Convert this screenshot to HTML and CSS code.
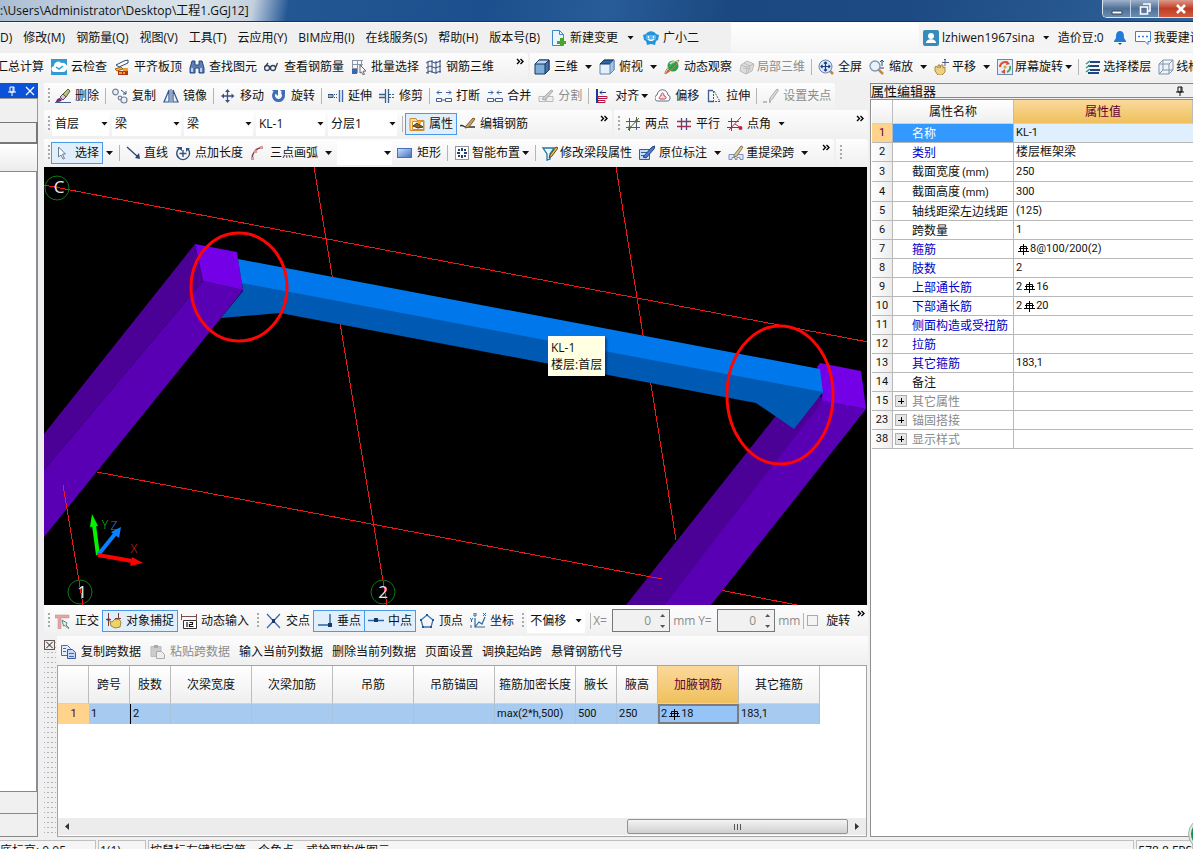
FILE: index.html
```html
<!DOCTYPE html>
<html lang="zh-CN">
<head>
<meta charset="utf-8">
<title>工程1.GGJ12</title>
<link rel="stylesheet" href="styles.css">
</head>
<body>
<svg class="defs" aria-hidden="true">
<defs>
<linearGradient id="gb" x1="0" y1="0" x2="1" y2="1"><stop offset="0" stop-color="#cfe3fa"/><stop offset="1" stop-color="#3f6cc4"/></linearGradient>
<symbol id="cloud" viewBox="0 0 16 16"><rect width="16" height="16" fill="#2f9ad6"/><path d="M4 13a3 3 0 0 1-1-6 4 4 0 0 1 7-3 4 4 0 0 1 3 9z" fill="#fff"/><path d="M5 8l3 2 4-3" fill="none" stroke="#2f9ad6" stroke-width="1.5"/></symbol>
<symbol id="slab" viewBox="0 0 16 16"><path d="M2 6l8-4 4-1v3L5 8z" fill="#fff" stroke="#2c4a7c"/><path d="M1 10l6-2 2 2-6 2z" fill="#f4b23c" stroke="#a4630c"/><path d="M4 12h10v4H4z" fill="#b0351c"/><path d="M9 9h5v3H9z" fill="#f0a030"/><path d="M5 13h3v2H5zM9 13h2v2H9z" fill="#f0a030"/></symbol>
<symbol id="bino" viewBox="0 0 16 16"><path d="M3 2h3v4h4V2h3l2 7v5h-5V9H6v5H1V9z" fill="#5b7fb8" stroke="#27457c"/><path d="M3 9v4M12 9v4" stroke="#dce8fa" stroke-width="1.5"/></symbol>
<symbol id="glasses" viewBox="0 0 16 16"><g fill="none" stroke="#34435c" stroke-width="1.3"><circle cx="3" cy="9" r="2.500"/><circle cx="9" cy="9" r="2.500"/><path d="M5.500 9h1M1 8l3-4M11.500 9l2-5"/></g></symbol>
<symbol id="batch" viewBox="0 0 16 16"><path d="M1 1.500h11M1 5.500h11M1 9.500h6M1.500 1v13M6.500 1v13M10.500 1v6" stroke="#8894a8" fill="none"/><path d="M1 10h5v5H1z" fill="#3b66b4"/><path d="M9 6l6 6-3 .3 1.500 3-1.500.5L10.500 13 9 14z" fill="#fff" stroke="#666"/></symbol>
<symbol id="rebar3d" viewBox="0 0 16 16"><path d="M0 4l4-2 5 2 6-2M0 9l4-2 5 2 6-2M0 14l4-2 5 2 6-2M2 2v13M6 1v13M10 2v13M14 1v13" stroke="#35527e" fill="none"/></symbol>
<symbol id="cube" viewBox="0 0 16 16"><path d="M1 5l4-4h10v10l-4 4H1z" fill="#7fadd8" stroke="#17375f"/><path d="M1 5l4-4h10l-4 4z" fill="#b5d7f3" stroke="#17375f"/><path d="M11 5l4-4v10l-4 4z" fill="#3f73aa" stroke="#17375f"/></symbol>
<symbol id="topcube" viewBox="0 0 16 16"><path d="M1 5l4-4h10v10l-4 4H1z" fill="#e3effb" stroke="#6285b4"/><path d="M1 5l4-4h10l-4 4z" fill="#2f659e" stroke="#17375f"/><path d="M11 5l4-4v10l-4 4z" fill="#a5c5e6" stroke="#6285b4"/></symbol>
<symbol id="orbit" viewBox="0 0 16 16"><circle cx="9" cy="7" r="5.500" fill="#25a052"/><path d="M6 5a5 5 0 0 1 5-2" stroke="#a9ecb9" stroke-width="2" fill="none"/><path d="M1 15C0 11 9 3 15 1 14 5 6 13 1 15z" fill="none" stroke="#b98a50"/><path d="M1 15l3-5 2 2z" fill="#d3562c"/></symbol>
<symbol id="local3d" viewBox="0 0 16 16"><path d="M2 6l6-4 7 3-2 7-6 3-6-3z" fill="#dedede" stroke="#bbb"/><path d="M2 6l6 2 7-3M8 8l-1 7M5 4l6 3-2 7M4 9l8 1" stroke="#bbb" fill="none"/></symbol>
<symbol id="full" viewBox="0 0 16 16"><path d="M11 11l4 4" stroke="#b98a4c" stroke-width="2.500"/><circle cx="7.500" cy="7.500" r="6.500" fill="#dceafa" stroke="#6784ad"/><path d="M7.500 3v9M3 7.500h9M6 4.500L7.500 3 9 4.500M6 10.500L7.500 12 9 10.500M4.500 6L3 7.500 4.500 9M10.500 6L12 7.500 10.500 9" stroke="#1d3d83" stroke-width="1.200" fill="none"/></symbol>
<symbol id="zoomi" viewBox="0 0 16 16"><path d="M9 10l5 5" stroke="#c08c44" stroke-width="2.500"/><circle cx="6" cy="7" r="5" fill="#e9f2fc" stroke="#8295b0" stroke-width="1.300"/><path d="M13 1v6M11 3l2-2 2 2M11 9h4" stroke="#29487d" fill="none"/></symbol>
<symbol id="pan" viewBox="0 0 16 16"><path d="M1 8l1-1 2 2V6h2v3l1-3h2v3l2-1v5l-3 3H4l-3-4z" fill="#efd080" stroke="#a68a48"/><path d="M11 0v7M8 3.500h7M10 1l1-1 1 1" stroke="#4a5d80" fill="none"/></symbol>
<symbol id="screenrot" viewBox="0 0 16 16"><rect x=".5" y=".5" width="15" height="15" fill="#e4eefb" stroke="#6c87b0"/><path d="M3 8a5 5 0 0 1 8-4" stroke="#e04b30" stroke-width="2" fill="none"/><path d="M13 7a5 5 0 0 1-3 6" stroke="#3fa64c" stroke-width="2" fill="none"/><path d="M10 2l3 3-4 1zM8 10v5l-4-2z" fill="#e04b30"/><circle cx="8" cy="8" r="1.500" fill="#e6a028"/></symbol>
<symbol id="floors" viewBox="0 0 16 16"><path d="M5 3h10M3 7h11M5 11h10M3 14h11" stroke="#20467c" stroke-width="2"/><path d="M1 5l4-3M1 9l4-3M1 13l4-3" stroke="#2c9c78" stroke-width="1.500"/></symbol>
<symbol id="wire" viewBox="0 0 16 16"><path d="M1 5l4-4h10v10l-4 4H1zM1 5h10v10M11 5l4-4M5 1v10h10M5 11l-4 4" fill="#eaf1fa" fill-opacity=".5" stroke="#7f93b3"/></symbol>
<symbol id="eraser" viewBox="0 0 16 16"><path d="M0 14.500h16" stroke="#445e91"/><path d="M1 14c0-2 2-4 4-4l2 2c-1 2-4 2-6 2z" fill="#7b2968"/><path d="M5 9l3 3 3-3-3-3z" fill="#d7c3dc" stroke="#555"/><path d="M8 6l5-5 2 2-4 6z" fill="#b7c37c" stroke="#566130"/></symbol>
<symbol id="copy" viewBox="0 0 16 16"><g fill="#eee" stroke="#7483a0" stroke-width="1.200"><circle cx="3.500" cy="4" r="2.800"/><circle cx="8" cy="10" r="1.800"/><circle cx="12" cy="12" r="3"/></g><path d="M9 2l5 4M14 3v3h-3" stroke="#34527f" fill="none"/></symbol>
<symbol id="mirror" viewBox="0 0 16 16"><path d="M6 2v12H1zM10 2v12h5z" fill="#e6f0ff" stroke="#31568e" stroke-width="1.200"/><path d="M8 1v14" stroke="#31568e"/></symbol>
<symbol id="move" viewBox="0 0 16 16"><path d="M7.500 3v10M3 8h10" stroke="#3a5488" stroke-width="1.300"/><path d="M7.500 1l2.500 3H5zM7.500 15l2.500-3H5zM1 8l3-2.500v5zM14.500 8l-3-2.500v5z" fill="#3a5488"/></symbol>
<symbol id="rotate" viewBox="0 0 16 16"><path d="M4 4a5 5 0 1 0 7 0" fill="none" stroke="#3f6cb4" stroke-width="3"/><path d="M1 2h6v6zM9 2h5v5z" fill="#3f6cb4"/></symbol>
<symbol id="extend" viewBox="0 0 16 16"><path d="M0 6.500h5v3H0z" fill="#9db3d4" stroke="#34527f"/><path d="M6 6.500h4M6 9.500h4" stroke="#34527f" stroke-dasharray="1 1"/><path d="M11.500 2v12M14.500 2v12" stroke="#3d6ab0" stroke-width="1.400"/></symbol>
<symbol id="trim" viewBox="0 0 16 16"><path d="M0 6.500h6M0 9.500h6M6.500 1v14M9.500 1v14" stroke="#34628f" stroke-width="1.300"/><path d="M10 6.500h6M10 9.500h6" stroke="#34628f" stroke-dasharray="2 1"/></symbol>
<symbol id="break" viewBox="0 0 16 16"><path d="M1 4.500h5M10 4.500h5M3 2.500l-2 2 2 2M13 2.500l2 2-2 2" fill="none" stroke="#3762a6"/><path d="M.5 10.500h5v3h-5zM9.500 10.500h6v3h-6zM6 12h3" fill="#fff" stroke="#445e91"/></symbol>
<symbol id="merge" viewBox="0 0 16 16"><path d="M1 4.500h5M10 4.500h5M4 2.500l2 2-2 2M12 2.500l-2 2 2 2" fill="none" stroke="#3762a6"/><path d="M.5 10.500h6v3h-6zM8.500 10.500h7v3h-7zM6 12h3" fill="#fff" stroke="#445e91"/></symbol>
<symbol id="split" viewBox="0 0 16 16"><path d="M1 8.500h7v5H1zM8 8.500h7v5H8z" fill="#eee" stroke="#bbb"/><path d="M4 11l9-9 2 1-8 9z" fill="#ccc" stroke="#aaa"/></symbol>
<symbol id="align" viewBox="0 0 16 16"><path d="M2 1v14" stroke="#173b86" stroke-width="2"/><path d="M5 4.500h6M7 2.500l-2 2 2 2" stroke="#173b86" fill="none"/><path d="M3 8.500h9v2H3zM3 12.500h7v2H3z" fill="#fff" stroke="#b01642"/></symbol>
<symbol id="offset" viewBox="0 0 16 16"><path d="M4 13a3 3 0 0 1-2-6c1-7 10-7 11 0a3 3 0 0 1-2 6z" fill="#fff" stroke="#5a6f90"/><path d="M5 11c-2-1 0-3 1-3 0-4 3-4 3 0 2 0 3 2 1 3z" fill="#f6dcdc" stroke="#c83d3d"/></symbol>
<symbol id="stretch" viewBox="0 0 16 16"><path d="M7 2.500H2.500v11H8" fill="none" stroke="#3c5d92" stroke-width="1.300"/><path d="M7.500 3v10M8 3l6 10.500H8" fill="none" stroke="#3c5d92" stroke-dasharray="2 1"/></symbol>
<symbol id="grippt" viewBox="0 0 16 16"><path d="M0 14h4M6 14h2" stroke="#bbb" stroke-width="2"/><path d="M7 10l7-9 1.500 1-6 9-3 2z" fill="#ddd" stroke="#aaa"/></symbol>
<symbol id="props" viewBox="0 0 16 16"><path d="M1 2.500h6l1 2h7v10H1z" fill="#ffe0a2" stroke="#d48b2a"/><path d="M3.500 5.500h11v8h-11z" fill="#fff" stroke="#d48b2a"/><path d="M4 10l4-3 6 4-5 1z" fill="#8a6a28" stroke="#43320f"/><path d="M9 5h3v3H9z" fill="#f2a72e"/></symbol>
<symbol id="editbar" viewBox="0 0 16 16"><path d="M0 10c3-2 3 1 6 1h9" stroke="#333" stroke-width="1.500" fill="none"/><path d="M6 10l7-8 2 1-6 8-4 1z" fill="#c9a36a" stroke="#7d592c"/></symbol>
<symbol id="twopt" viewBox="0 0 16 16"><path d="M4.500 2v13M11.500 1v13M1 11.500h14M1 5.500h14" stroke="#4c5b7c"/><path d="M3 14L14 2" stroke="#6e5b34"/><circle cx="4.500" cy="11.500" r="1.500" fill="#4b7a2a"/><circle cx="11.500" cy="5" r="1.500" fill="#4b7a2a"/></symbol>
<symbol id="parallel" viewBox="0 0 16 16"><path d="M5.500 2v12M10.500 2v12" stroke="#3d4f7d" stroke-width="1.300"/><path d="M1 5.500h14M1 10.500h14" stroke="#a03050" stroke-width="1.300"/></symbol>
<symbol id="angle" viewBox="0 0 16 16"><path d="M4.500 2v13M1 5.500h11M0 11.500h12" stroke="#3d4f7d"/><path d="M2 14L14 1M8 8l6 4" stroke="#c02a48"/><circle cx="13.500" cy="12" r="2" fill="#d02040"/></symbol>
<symbol id="cursor" viewBox="0 0 16 16"><path d="M3.500 2v10l2.500-2 2 4 1.500-.5-2-4.500h3z" fill="#fff" stroke="#6b7c98"/></symbol>
<symbol id="line" viewBox="0 0 16 16"><path d="M1 2l11 10" stroke="#2a4572" stroke-width="1.300"/><path d="M14 14l-5-1 4-5z" fill="#2a4572"/></symbol>
<symbol id="ptlen" viewBox="0 0 16 16"><path d="M5 3a6 6 0 0 0-1 10 6 6 0 0 0 8 0 6 6 0 0 0 1-9M8 5v7M4.500 8.500h7" fill="none" stroke="#34527f" stroke-width="1.400"/><path d="M1 2h6v4zM15 3l-4 0v4z" fill="#34527f"/></symbol>
<symbol id="arc" viewBox="0 0 16 16"><path d="M2 14C2 8 6 3 12 2.500" fill="none" stroke="#8c4450" stroke-width="1.400"/><path d="M1 12h3v3H1zM4 5h3v3H4zM10 1h3v3h-3z" fill="#d49ca2"/></symbol>
<symbol id="rect" viewBox="0 0 16 16"><rect x=".5" y="3.500" width="14" height="9" fill="url(#gb)" stroke="#4d6db4"/></symbol>
<symbol id="smart" viewBox="0 0 16 16"><rect x="1.500" y="1.500" width="13" height="13" fill="#fff" stroke="#334" stroke-dasharray="1 1"/><path d="M8 3v10M3 8h10" stroke="#24406c" stroke-dasharray="3 4" stroke-width="2"/><path d="M4 4h2v2H4zM10 4h2v2h-2zM4 10h2v2H4zM10 10h2v2h-2z" fill="#24406c"/></symbol>
<symbol id="modseg" viewBox="0 0 16 16"><path d="M1 3h11l-4 6v5l-3 1V9z" fill="#e9f6ff" stroke="#1f78a8" stroke-width="1.300"/><path d="M8 10l6-8 2 1-6 8-3 2z" fill="#edc052" stroke="#5a4317"/></symbol>
<symbol id="annot" viewBox="0 0 16 16"><path d="M.5 4.500h10v10H.5z" fill="#cbdcf6" stroke="#365ea8"/><path d="M2 7.500h6M2 10.500h4" stroke="#365ea8"/><path d="M4 12l9-10 3-1-1 3-8 9z" fill="#4c7ccc" stroke="#1f4484"/></symbol>
<symbol id="respan" viewBox="0 0 16 16"><path d="M1 14.500v-5h14v5h-3v-2H9v2H7v-2H4v2z" fill="#dfe9fa" stroke="#7c90ba"/><path d="M6 10l7-9 2 1-6 9-3 1z" fill="#d8c29a" stroke="#8a7a5e"/></symbol>
<symbol id="newdoc" viewBox="0 0 16 16"><path d="M1.500 .5h7l4 4v11h-11z" fill="#eaf4fd" stroke="#3c88c4"/><path d="M8.500 .5v4h4" fill="none" stroke="#3c88c4"/><path d="M9 8h3v3h3v3h-3v2H9v-2H6v-3h3z" fill="#4aa52a"/></symbol>
<symbol id="mascot" viewBox="0 0 16 16"><path d="M0 5l3-1a6 6 0 0 1 10 0l3 1-1 5-2 1-1 4-4-1-4 1-1-4-2-1z" fill="#2494dc"/><path d="M3 5h10v4q-5 4-10 0z" fill="#5fb6ea"/><path d="M5.500 6v2M10.500 6v2M5 9q3 3 6 0" stroke="#fff" stroke-width="1.200" fill="none"/></symbol>
<symbol id="user" viewBox="0 0 16 16"><rect width="16" height="16" rx="2" fill="#368cbb"/><circle cx="8" cy="6" r="3" fill="#fff"/><path d="M3 13c0-5 10-5 10 0z" fill="#fff"/></symbol>
<symbol id="bell" viewBox="0 0 16 16"><path d="M8 1c4 0 4 4 4 7l2 3v1H2v-1l2-3c0-3 0-7 4-7z" fill="#237bd8"/><path d="M6 13h4l-2 2z" fill="#174b85"/></symbol>
<symbol id="chat" viewBox="0 0 16 16"><path d="M.5 1.500h15v10H13v3l-3-3H.5z" fill="#fff" stroke="#3d7fd0"/><path d="M3 6.500h10" stroke="#3d7fd0" stroke-width="1.500" stroke-dasharray="2 2"/></symbol>
<symbol id="ortho" viewBox="0 0 16 16"><path d="M0 2h14v3H6v11H3V5H0z" fill="#dfa6a6" stroke="#c98a8a" stroke-width=".5"/><path d="M7 7l5 3-1 2 3 3-1 .5-3-3-1.500.5z" fill="#e6f0f0" stroke="#5f7f88"/></symbol>
<symbol id="osnap" viewBox="0 0 16 16"><path d="M2.500 0v13M12.500 0v7M0 6.500h5M9 5.500h6" stroke="#80393a"/><path d="M4 8l2 1 3-3 1 1 3-1 2 3-1 5-5 1-4-2z" fill="#f0d368" stroke="#a08838"/><circle cx="2.500" cy="6.500" r="1.500" fill="#80393a"/></symbol>
<symbol id="dyn" viewBox="0 0 16 16"><path d="M0 3.500h16M.5 1v6M15.500 1v6" stroke="#784c4c"/><path d="M2.500 7.500h13v8h-13z" fill="#fff" stroke="#333"/><path d="M6 9v5M8.500 9.500h3v2h-3v2h4" stroke="#111" stroke-width="1.200" fill="none"/></symbol>
<symbol id="cross" viewBox="0 0 16 16"><path d="M1 1l13 14M14 1L1 15" stroke="#3668a8" stroke-width="1.200"/><rect x="6" y="6" width="3" height="4" fill="#18386e"/></symbol>
<symbol id="perp" viewBox="0 0 16 16"><path d="M1 12h14M13 1v11" stroke="#2b62a6" stroke-width="1.400"/><rect x="11" y="10" width="4" height="4" fill="#18386e"/></symbol>
<symbol id="mid" viewBox="0 0 16 16"><path d="M0 7.500h16" stroke="#2b62a6" stroke-width="1.300"/><rect x="6" y="5" width="4" height="4" fill="#18386e"/></symbol>
<symbol id="vertex" viewBox="0 0 16 16"><path d="M8 2l6 5-2 7H4L2 7z" fill="none" stroke="#3a78b6" stroke-width="1.300"/><path d="M7 1h2v2H7zM1 6h2v2H1zM13 6h2v2h-2zM3 13h2v2H3zM11 13h2v2h-2z" fill="#245895"/></symbol>
<symbol id="coord" viewBox="0 0 16 16"><path d="M5 5v9h10M5 14l4-5 3 2 3-7" fill="none" stroke="#2c6a9e" stroke-width="1.200"/><path d="M0 5l1.500 2L3 5M1.500 7v2M13 0l3 3M16 0l-3 3M1 12v3M4 0h2v3H4z" stroke="#2c6a9e" fill="none"/></symbol>
<symbol id="pages" viewBox="0 0 16 16"><path d="M.5 1.500h6l3 3v7h-9z" fill="#e4edfb" stroke="#4868b0"/><path d="M6.500 5.500h5l3 3v6h-8z" fill="#c6d8f6" stroke="#3558a8"/><path d="M8 9.500h5M8 12.500h5M2 4.500h3M2 7.500h3" stroke="#4868b0"/></symbol>
<symbol id="paste" viewBox="0 0 16 16"><path d="M1 2.500h10v10H1z" fill="#ccc" stroke="#bbb"/><path d="M4 1h4v3H4z" fill="#aaa"/><path d="M6.500 7.500h5l3 3v4h-8z" fill="#eee" stroke="#aaa"/></symbol>
<symbol id="rebar" viewBox="0 0 12 12"><path d="M6.500 1v11M3.500 3.500h6v5h-6zM2 5.500h9M1 8.500h11" fill="none" stroke="#000"/></symbol>
<symbol id="pin" viewBox="0 0 10 10"><path d="M3 1h4v5H3zM6 1v5M1 6h8M5 6v4" fill="none" stroke="currentColor"/></symbol>
<symbol id="x" viewBox="0 0 10 10"><path d="M1 1l8 8M9 1L1 9" stroke="currentColor" stroke-width="1.200"/></symbol>
<symbol id="more" viewBox="0 0 8 8"><path d="M1 1l2.500 2.500L1 6M4.500 1L7 3.500 4.500 6" fill="none" stroke="#000" stroke-width="1.400"/></symbol>
</defs>
</svg>

<div class="app">
<header class="title"><span>:\Users\Administrator\Desktop\工程1.GGJ12]</span>
<div class="win">
<button aria-label="最小化"><svg viewBox="0 0 12 12"><path d="M1 8h10v3H1z" fill="#fff" stroke="#345"/></svg></button><button aria-label="还原"><svg viewBox="0 0 12 12"><path d="M4 1h7v7H9M1.500 4h7v7h-7z" fill="none" stroke="#fff" stroke-width="1.600"/></svg></button><button class="close" aria-label="关闭"><svg viewBox="0 0 12 12"><path d="M2 2l8 8M10 2l-8 8" stroke="#fff" stroke-width="2.600"/></svg></button>
</div></header>

<nav class="menu">
<div class="menu-main">
<button>D)</button><button>修改(M)</button><button>钢筋量(Q)</button><button>视图(V)</button><button>工具(T)</button><button>云应用(Y)</button><button>BIM应用(I)</button><button>在线服务(S)</button><button>帮助(H)</button><button>版本号(B)</button>
<button class="new"><svg class="i"><use href="#newdoc"/></svg>新建变更</button><i class="dd"></i><button><svg class="i"><use href="#mascot"/></svg>广小二</button>
</div>
<div class="menu-user">
<button><svg class="i"><use href="#user"/></svg>lzhiwen1967sina</button><i class="dd"></i><span>造价豆:0</span><button aria-label="通知"><svg class="i"><use href="#bell"/></svg></button><button><svg class="i"><use href="#chat"/></svg>我要建议</button>
</div>
</nav>

<div class="bar top">
<div class="seg first">
<button>汇总计算</button><button><svg class="i"><use href="#cloud"/></svg>云检查</button><button><svg class="i"><use href="#slab"/></svg>平齐板顶</button><button><svg class="i"><use href="#bino"/></svg>查找图元</button><button><svg class="i"><use href="#glasses"/></svg>查看钢筋量</button><button><svg class="i"><use href="#batch"/></svg>批量选择</button><button><svg class="i"><use href="#rebar3d"/></svg>钢筋三维</button><button class="more" aria-label="更多"><svg><use href="#more"/></svg></button>
</div>
<div class="seg grow views">
<button><svg class="i"><use href="#cube"/></svg>三维</button><i class="dd"></i><button><svg class="i"><use href="#topcube"/></svg>俯视</button><i class="dd"></i><button><svg class="i"><use href="#orbit"/></svg>动态观察</button><button class="tight" disabled><svg class="i"><use href="#local3d"/></svg>局部三维</button><i class="sep"></i><button><svg class="i"><use href="#full"/></svg>全屏</button><button><svg class="i"><use href="#zoomi"/></svg>缩放</button><i class="dd"></i><button class="tight"><svg class="i"><use href="#pan"/></svg>平移</button><i class="dd"></i><button class="tight"><svg class="i"><use href="#screenrot"/></svg>屏幕旋转</button><i class="dd near"></i><i class="sep"></i><button class="tight"><svg class="i"><use href="#floors"/></svg>选择楼层</button><button class="tight"><svg class="i"><use href="#wire"/></svg>线框</button>
</div>
</div>

<main class="work">
<aside class="left">
<div class="left-head"><svg><use href="#pin"/></svg><svg><use href="#x"/></svg></div>
<div class="left-tab"></div><div class="left-btn"></div><div class="left-tools"></div><div class="left-body"></div><div class="left-foot"></div><div class="left-foot"></div>
</aside>

<section class="center">
<div class="bar a">
<div class="seg edit"><i class="grip"></i>
<button><svg class="i"><use href="#eraser"/></svg>删除</button><i class="sep"></i><button><svg class="i"><use href="#copy"/></svg>复制</button><button><svg class="i"><use href="#mirror"/></svg>镜像</button><i class="sep"></i><button><svg class="i"><use href="#move"/></svg>移动</button><button><svg class="i"><use href="#rotate"/></svg>旋转</button><i class="sep"></i><button><svg class="i"><use href="#extend"/></svg>延伸</button><button><svg class="i"><use href="#trim"/></svg>修剪</button><i class="sep"></i><button><svg class="i"><use href="#break"/></svg>打断</button><button><svg class="i"><use href="#merge"/></svg>合并</button><button disabled><svg class="i"><use href="#split"/></svg>分割</button><i class="sep"></i><button><svg class="i"><use href="#align"/></svg>对齐</button><i class="dd near"></i><button><svg class="i"><use href="#offset"/></svg>偏移</button><button><svg class="i"><use href="#stretch"/></svg>拉伸</button><i class="sep"></i><button disabled><svg class="i"><use href="#grippt"/></svg>设置夹点</button>
</div></div>

<div class="bar b">
<div class="seg grow"><i class="grip"></i>
<div class="combos">
<div class="combo short"><select aria-label="楼层"><option>首层</option></select></div><div class="combo"><select aria-label="构件大类"><option>梁</option></select></div><div class="combo"><select aria-label="构件类型"><option>梁</option></select></div><div class="combo"><select aria-label="构件"><option>KL-1</option></select></div><div class="combo"><select aria-label="分层"><option>分层1</option></select></div>
</div>
<i class="sep"></i><button class="on"><svg class="i"><use href="#props"/></svg>属性</button><button><svg class="i"><use href="#editbar"/></svg>编辑钢筋</button><button class="more" aria-label="更多"><svg><use href="#more"/></svg></button>
</div>
<div class="seg axis"><i class="grip"></i>
<button><svg class="i"><use href="#twopt"/></svg>两点</button><button><svg class="i"><use href="#parallel"/></svg>平行</button><button><svg class="i"><use href="#angle"/></svg>点角</button><i class="dd"></i><button class="more" aria-label="更多"><svg><use href="#more"/></svg></button>
</div></div>

<div class="bar c">
<div class="seg grow"><i class="grip"></i>
<button class="on"><svg class="i"><use href="#cursor"/></svg>选择</button><i class="dd"></i><i class="sep"></i><button class="tight"><svg class="i"><use href="#line"/></svg>直线</button><button><svg class="i"><use href="#ptlen"/></svg>点加长度</button><button><svg class="i"><use href="#arc"/></svg>三点画弧</button><i class="dd"></i><div class="combo arcs"><select aria-label="弧方式"><option></option></select></div><button><svg class="i"><use href="#rect"/></svg>矩形</button><i class="sep"></i><button class="tight"><svg class="i"><use href="#smart"/></svg>智能布置</button><i class="dd near"></i><i class="sep"></i><button class="tight"><svg class="i"><use href="#modseg"/></svg>修改梁段属性</button><button><svg class="i"><use href="#annot"/></svg>原位标注</button><i class="dd"></i><button class="tight"><svg class="i"><use href="#respan"/></svg>重提梁跨</button><i class="dd"></i><button class="more" aria-label="更多"><svg><use href="#more"/></svg></button>
</div>
<div class="seg tail"><i class="grip"></i></div></div>

<div class="view">
<svg class="scene" viewBox="44 167 823 438" preserveAspectRatio="xMidYMid slice" role="img" aria-label="三维视图">
<g stroke="#f01818" fill="none" shape-rendering="crispEdges"><path d="M44 185L868 342M97 472L630 573M720 590L797 605M314 167L387 605M616 167L676 540"/></g>
<path d="M195 244L203 281 44 470V434z" fill="#4b0096"/>
<path d="M203 281L243 290 221 318 44 537V470z" fill="#5a00b4"/>
<path d="M195 244L237 252 243 290 203 281z" fill="#7300e6"/>
<path d="M782 408L823 396 825 402 664 605H626z" fill="#4b0096"/>
<path d="M823 394L824 401 866 409 711 605H664L820 405z" fill="#5a00b4"/>
<path d="M817 367L820 363 861 371 866 409 823 401 820 380z" fill="#7300e6"/>
<path d="M238 259L820 369 823 393 242 284z" fill="#0078eb"/>
<path d="M242 283L823 392 794 429 756 403 280 313 221 318 243 291z" fill="#005ab4"/>
<path d="M63 485L83 605M630 573L662 579" stroke="#f01818" shape-rendering="crispEdges"/>
<g fill="none" stroke="#107818"><circle cx="57" cy="188" r="12"/><circle cx="80" cy="592" r="12"/><circle cx="383" cy="592" r="12"/></g>
<g class="axis-label"><text x="59" y="193">C</text><text x="82" y="598">1</text><text x="383" y="598">2</text></g>
<g fill="none" stroke="#ff0505" stroke-width="3"><ellipse cx="239" cy="287" rx="48" ry="54"/><ellipse cx="780" cy="395" rx="53" ry="69"/></g>
<g stroke-width="4"><path d="M98 555L94 525" stroke="#00f400"/><path d="M98 555L115 534" stroke="#0880ff"/><path d="M98 555L132 561" stroke="#f00"/></g>
<path d="M92 514l6 12-8 1z" fill="#00f400"/><path d="M121 527l-2 11-8-6z" fill="#0880ff"/><path d="M143 563l-13 3 2-9z" fill="#f00"/>
<g class="gizmo"><text x="105" y="529" fill="#20d020">Y</text><text x="114" y="530" fill="#2080f0">Z</text><text x="134" y="553" fill="#f02020">X</text></g>
</svg>
<div class="tip">KL-1<br>楼层:首层</div>
</div>

<div class="bar snap">
<div class="seg grow"><i class="grip"></i>
<button><svg class="i"><use href="#ortho"/></svg>正交</button><button class="on"><svg class="i"><use href="#osnap"/></svg>对象捕捉</button><button><svg class="i"><use href="#dyn"/></svg>动态输入</button><i class="grip mid"></i><button><svg class="i"><use href="#cross"/></svg>交点</button><button class="on"><svg class="i"><use href="#perp"/></svg>垂点</button><button class="on"><svg class="i"><use href="#mid"/></svg>中点</button><button><svg class="i"><use href="#vertex"/></svg>顶点</button><button><svg class="i"><use href="#coord"/></svg>坐标</button><i class="grip mid"></i>
<div class="combo off"><select aria-label="偏移方式"><option>不偏移</option></select></div><i class="sep"></i>
<div class="field"><label for="dx">X=</label><span class="spin"><input id="dx" value="0" disabled></span><span>mm</span></div><div class="field"><label for="dy">Y=</label><span class="spin"><input id="dy" value="0" disabled></span><span>mm</span></div><i class="sep"></i>
<label class="check"><input type="checkbox">旋转</label><button class="more" aria-label="更多"><svg><use href="#more"/></svg></button>
</div></div>

<section class="data">
<div class="data-grip"><button aria-label="关闭"><svg><use href="#x"/></svg></button></div>
<div class="data-main">
<div class="data-tools"><button><svg class="i"><use href="#pages"/></svg>复制跨数据</button><button disabled><svg class="i"><use href="#paste"/></svg>粘贴跨数据</button><button>输入当前列数据</button><button>删除当前列数据</button><button>页面设置</button><button>调换起始跨</button><button>悬臂钢筋代号</button></div>
<div class="sheet">
<table class="span-table">
<colgroup><col class="w30"><col class="w41"><col class="w41"><col class="w81"><col class="w81"><col class="w81"><col class="w81"><col class="w81"><col class="w41"><col class="w41"><col class="w81"><col class="w81"></colgroup>
<thead><tr><th></th><th>跨号</th><th>肢数</th><th>次梁宽度</th><th>次梁加筋</th><th>吊筋</th><th>吊筋锚固</th><th>箍筋加密长度</th><th>腋长</th><th>腋高</th><th class="hot">加腋钢筋</th><th>其它箍筋</th></tr></thead>
<tbody><tr><th>1</th><td>1</td><td class="caret">2</td><td></td><td></td><td></td><td></td><td>max(2*h,500)</td><td>500</td><td>250</td><td class="sel">2<svg class="rb"><use href="#rebar"/></svg>18</td><td>183,1</td></tr></tbody>
</table>
<div class="hscroll"><i class="arr l"></i><div class="track"><div class="thumb"></div></div><i class="arr r"></i></div>
</div>
</div>
</section>
</section>

<aside class="props">
<div class="props-head"><h2>属性编辑器</h2><svg><use href="#pin"/></svg></div>
<div class="props-body">
<table class="prop-table">
<colgroup><col class="c-no"><col class="c-name"><col></colgroup>
<thead><tr><th></th><th>属性名称</th><th class="hot">属性值</th></tr></thead>
<tbody>
<tr class="cur"><th>1</th><td>名称</td><td>KL-1</td></tr>
<tr class="blue"><th>2</th><td>类别</td><td class="zh">楼层框架梁</td></tr>
<tr><th>3</th><td>截面宽度<small>(mm)</small></td><td>250</td></tr>
<tr><th>4</th><td>截面高度<small>(mm)</small></td><td>300</td></tr>
<tr><th>5</th><td>轴线距梁左边线距</td><td>(125)</td></tr>
<tr><th>6</th><td>跨数量</td><td>1</td></tr>
<tr class="blue"><th>7</th><td>箍筋</td><td><svg class="rb"><use href="#rebar"/></svg>8@100/200(2)</td></tr>
<tr class="blue"><th>8</th><td>肢数</td><td>2</td></tr>
<tr class="blue"><th>9</th><td>上部通长筋</td><td>2<svg class="rb"><use href="#rebar"/></svg>16</td></tr>
<tr class="blue"><th>10</th><td>下部通长筋</td><td>2<svg class="rb"><use href="#rebar"/></svg>20</td></tr>
<tr class="blue"><th>11</th><td>侧面构造或受扭筋</td><td></td></tr>
<tr class="blue"><th>12</th><td>拉筋</td><td></td></tr>
<tr class="blue"><th>13</th><td>其它箍筋</td><td>183,1</td></tr>
<tr><th>14</th><td>备注</td><td></td></tr>
<tr class="group"><th>15</th><td><button aria-label="展开"></button>其它属性</td><td></td></tr>
<tr class="group"><th>23</th><td><button aria-label="展开"></button>锚固搭接</td><td></td></tr>
<tr class="group"><th>38</th><td><button aria-label="展开"></button>显示样式</td><td></td></tr>
</tbody></table>
</div>
</aside>
</main>

<footer class="status"><span class="s1">底标高: 0.05</span><span class="s2">1(1)</span><span class="s3">按鼠标左键指定第一个角点，或拾取构件图元</span><span class="s4">578.8 FPS</span></footer>
<div class="ball"></div>
</div>
</body>
</html>
```

FILE: styles.css
```css
* { box-sizing: border-box; }
body { margin: 0; overflow: hidden; background: #f0f0f0; color: #111; font: 12px/16px "Open Sans", "Noto Sans CJK SC", sans-serif; }
.defs { position: absolute; width: 0; height: 0; }
button, select, input { font: inherit; color: inherit; margin: 0; }
button { display: inline-flex; align-items: center; gap: 4px; flex: none; padding: 0; border: 0; background: none; white-space: nowrap; }
button:disabled { color: #8c8c8c; }
.i { width: 16px; height: 16px; flex: none; }
.app { position: relative; display: flex; flex-direction: column; height: 100vh; overflow: hidden; }

.title { display: flex; flex: none; height: 22px; align-items: center; justify-content: space-between; border-bottom: 1px solid #17325c; background: linear-gradient(100deg, #a9bdd3 0, #c3d0df 80px, #dce5ea 190px, #c3d0df 250px, #235794 285px, #1c4f8d 480px, #285c98 600px, #1b4880 720px, #1d4a82 900px, #2f6299 100%); white-space: nowrap; }
.win { display: flex; align-self: flex-start; width: 91px; height: 18px; border: 1px solid #dbe5ef; border-width: 0 0 1px 1px; border-radius: 0 0 0 5px; overflow: hidden; }
.win button { flex: 0 0 28px; justify-content: center; border-right: 1px solid #c5d3e2; background: linear-gradient(#9fb3ca, #4f7098 50%, #6a8cb2); }
.win .close { flex: 0 0 44px; background: linear-gradient(#dc9a8a, #c03c24 50%, #d05c3e); }
.win svg { width: 12px; height: 12px; }

.menu { display: flex; flex: none; height: 30px; justify-content: space-between; background: linear-gradient(#fff, #f5f5f5); border-top: 1px solid #fafafa; }
.menu-main, .menu-user { display: flex; align-items: center; }
.menu-main { gap: 11px; padding-right: 32px; background: #f0f0f0; }
.menu-main .new { gap: 3px; }
.menu-main .dd { margin: 0 -2px; }
.menu-user { flex: 0 0 274px; gap: 8px; padding-left: 4px; background: #f4f4f4; overflow: hidden; white-space: nowrap; }
.menu-user .i { margin: 0 -1px 0 0; }

.bar { display: flex; flex: none; gap: 2px; }
.seg { display: flex; align-items: center; gap: 7px; min-width: 0; overflow: hidden; background: linear-gradient(#fdfdfd, #f0f0f0); border-radius: 0 3px 3px 0; white-space: nowrap; }
.grow { flex: 1; }
.top { height: 29px; padding-top: 1px; }
.first { flex: 0 0 528px; justify-content: flex-start; }
.first > button:first-child { margin-left: -4px; }
.views { padding-left: 4px; }
.tight { gap: 2px; }
.dd { flex: none; width: 7px; height: 4px; background: #111; clip-path: polygon(0 0, 100% 0, 50% 100%); }
.dd.near { margin-left: -5px; }
.sep { flex: none; width: 1px; height: 16px; margin: 0 -1px; background: #b5b5b5; }
.grip { flex: none; width: 2px; height: 16px; margin-left: 4px; margin-right: -2px; background: repeating-linear-gradient(#aaa 0 2px, transparent 2px 4px); }
.grip.mid { margin-left: 1px; margin-right: 0; }
.more { align-self: flex-start; margin: 5px 4px 0 auto; }
.more svg { width: 8px; height: 8px; }
.on { height: 22px; padding: 0 3px; margin: 0 -4px; border: 1px solid #4a9ae8; background: #e1effc; }

.work { display: flex; flex: 1; min-height: 0; padding-top: 2px; }
.left { display: flex; flex: 0 0 44px; min-width: 0; flex-direction: column; padding-right: 6px; }
.left-head { display: flex; height: 15px; gap: 8px; align-items: center; justify-content: flex-end; padding-right: 3px; background: #0a52d8; color: #fff; }
.left-head svg { width: 10px; height: 10px; }
.left-tab { height: 24px; border: 1px solid #999; border-width: 1px 1px 0 0; }
.left-btn { height: 22px; border: 1px solid #777; border-width: 1px 2px 2px 0; background: #f0f0f0; }
.left-tools { height: 28px; border-right: 1px solid #888; border-bottom: 1px solid #888; background: linear-gradient(#fff, #ececec); }
.left-body { flex: 1; border-right: 2px solid #8c8c94; background: #fff; }
.left-foot { height: 22px; border: 1px solid #888; border-width: 1px 1px 0 0; }
.left-foot:last-child { height: 24px; border-bottom-width: 1px; margin-bottom: 1px; }

.center { display: flex; flex: 1; min-width: 0; flex-direction: column; }
.a { height: 27px; padding-bottom: 1px; }
.b { height: 28px; padding-bottom: 1px; }
.c { height: 29px; padding-top: 1px; }
.edit { padding-right: 4px; }
.axis { flex: 0 0 254px; }
.tail { flex: 0 0 32px; }
.combos { display: flex; gap: 3px; margin: 0 -1px 0 -3px; }
.combo { position: relative; flex: none; width: 69px; height: 24px; background: #fff; }
.combo::after { content: ""; position: absolute; right: 1px; top: 10px; width: 7px; height: 4px; background: #111; clip-path: polygon(0 0, 100% 0, 50% 100%); }
.combo.short { width: 57px; }
.combo select { width: 100%; height: 100%; padding: 0 12px 0 3px; border: 0; background: none; appearance: none; }
.combo.arcs { width: 55px; margin: 0 -2px; }
.combo.off { width: 58px; margin: 0 -1px 0 -4px; }
.combo.off::after { right: 3px; }

.view { position: relative; flex: 1; min-height: 0; margin-right: 1px; background: #000; overflow: hidden; }
.scene { display: block; width: 100%; height: 100%; }
.axis-label { font: 17px "Open Sans", sans-serif; fill: #e8e8e8; text-anchor: middle; }
.gizmo { font: 300 12px "Open Sans", sans-serif; text-anchor: middle; }
.tip { position: absolute; left: 504px; top: 169px; padding: 2px; border: 1px solid #fff; background: #ffffe1; box-shadow: 2px 2px 2px #0006; line-height: 17px; }

.snap { height: 31px; }
.field { display: flex; align-items: center; gap: 3px; color: #8c8c8c; margin-left: -4px; }
.field + .field { margin-left: -1px; }
.field label { width: 16px; }
.field > span:last-child { width: 19px; }
.spin { position: relative; flex: none; width: 58px; height: 23px; }
.spin input { width: 100%; height: 100%; padding: 0 18px 0 2px; border: 1px solid #777; background: #f1f1f1; text-align: right; }
.spin::before, .spin::after { content: ""; position: absolute; right: 5px; width: 5px; height: 3px; background: #555; }
.spin::before { top: 5px; clip-path: polygon(50% 0, 100% 100%, 0 100%); }
.spin::after { bottom: 4px; clip-path: polygon(0 0, 100% 0, 50% 100%); }
.check { display: flex; align-items: center; gap: 8px; margin-left: -3px; }
.check input { appearance: none; width: 11px; height: 11px; border: 1px solid #aaa; background: #f4f4f4; }
.snap .more { margin-right: 5px; }

.data { display: flex; flex: 0 0 202px; padding-bottom: 1px; }
.data-grip { flex: 0 0 12px; margin-right: 1px; padding-top: 4px; background: radial-gradient(circle, #b4b4b4 1px, transparent 1px) 2px 14px / 4px 5px; background-clip: content-box; }
.data-grip button { display: flex; width: 11px; height: 10px; border: 1px solid #655; background: #eee; }
.data-grip svg { width: 9px; height: 8px; }
.data-main { display: flex; flex: 1; min-width: 0; flex-direction: column; }
.data-tools { display: flex; align-items: center; gap: 9px; flex: 0 0 29px; padding: 2px 0 0 4px; background: linear-gradient(#fcfcfc, #f0f0f0); }
.sheet { display: flex; flex: 1; flex-direction: column; margin-right: 1px; border: 1px solid #a4a4a4; background: #fff; padding-bottom: 1px; }
table { border-collapse: separate; border-spacing: 0; table-layout: fixed; }
th, td { padding: 0; font-weight: 400; white-space: nowrap; overflow: hidden; }
thead th { background: linear-gradient(#fff, #efefef); border-right: 1px solid #bdbdbd; border-bottom: 1px solid #d2d2d2; }
thead .hot { background: linear-gradient(#fbd99c, #efc05c); color: #600030; }
tbody td, tbody th { font-family: Roboto, "Noto Sans CJK SC", sans-serif; font-size: 11px; }
.span-table { width: 762px; }
.w30 { width: 31px; } .w41 { width: 41px; } .w81 { width: 81px; }
.span-table thead th { height: 38px; padding-top: 1px; }
.span-table tbody th { height: 20px; background: #ffd38c; color: #600030; }
.span-table td { height: 20px; padding-left: 2px; background: #a6caf0; border-right: 1px solid #a9c2da; }
.span-table .caret { border-left: 1px solid #000; }
.span-table .sel { border: 2px solid #7c7c7c; padding-left: 1px; background: #96c4f6; }
.rb { width: 12px; height: 12px; margin: 0 1px; vertical-align: -3px; }
.hscroll { display: flex; align-items: center; margin-top: auto; height: 17px; background: #ececec; }
.arr { width: 18px; height: 7px; background: #333; }
.arr.l { clip-path: polygon(7px 50%, 11px 0, 11px 100%); }
.arr.r { clip-path: polygon(7px 0, 11px 50%, 7px 100%); }
.track { display: flex; flex: 1; justify-content: flex-end; }
.thumb { width: 221px; height: 15px; border: 1px solid #929292; border-radius: 2px; background: repeating-linear-gradient(90deg, #555 0 1px, transparent 1px 3px) center / 8px 6px no-repeat, linear-gradient(#f4f4f4, #cfcfcf); }

.props { display: flex; flex: 0 0 325px; flex-direction: column; padding-left: 2px; }
.props-head { display: flex; align-items: center; justify-content: space-between; height: 15px; padding-right: 8px; border: 1px solid #8a8a8a; border-right: 0; }
.props-head h2 { margin: 0; font-size: 13px; font-weight: 400; line-height: 14px; }
.props-head svg { width: 10px; height: 10px; }
.props-body { flex: 1; min-height: 0; margin: 1px 0 1px; padding-left: 1px; border: 1px solid #8f8f8f; border-right: 0; background: #fff; overflow: hidden; }
.prop-table { width: 100%; }
.c-no { width: 21px; } .c-name { width: 121px; }
.prop-table thead th { height: 24px; }
.prop-table tbody th, .prop-table td { height: 19px; border-right: 1px solid #b8b8b8; border-bottom: 1px solid #b8b8b8; }
.prop-table tbody th { background: linear-gradient(90deg, #fff, #ececec); }
.prop-table td:last-child { border-right: 0; padding-left: 2px; }
.prop-table td:nth-child(2) { position: relative; padding-top: 2px; padding-left: 19px; font-size: 12px; }
.prop-table .zh { font-size: 12px; }
.prop-table small { font-size: 11px; margin-left: 2px; }
.cur th { background: #ffd38c !important; color: #600030; }
.cur td { background: #dfeffd; }
.cur td:nth-child(2) { background: #3399ff; color: #fff; }
.blue td:nth-child(2) { color: #0000c8; }
.group td { color: #8a8a8a; }
.group button { position: absolute; left: 2px; top: 3px; width: 12px; height: 12px; border: 1px solid #b0b0b0; background: linear-gradient(#000, #000) center / 6px 1px no-repeat, linear-gradient(#000, #000) center / 1px 6px no-repeat, #e4e4e4; }

.status { display: flex; flex: 0 0 11px; gap: 2px; padding-top: 2px; overflow: hidden; white-space: nowrap; }
.status span { height: 20px; padding: 0 0 0 1px; border: 1px solid #c0c0c0; background: #f5f5f5; line-height: 20px; }
.status .s1 { flex: 0 0 96px; padding: 0; border-left: 0; }
.status .s2 { flex: 0 0 48px; }
.status .s3 { flex: 1; }
.status .s4 { flex: 0 0 55px; }
.ball { position: absolute; right: -26px; bottom: 0; width: 30px; height: 30px; border: 2px solid #e4e4e4; border-radius: 50%; outline: 1px solid #aaa; background: #16934a; }
```
